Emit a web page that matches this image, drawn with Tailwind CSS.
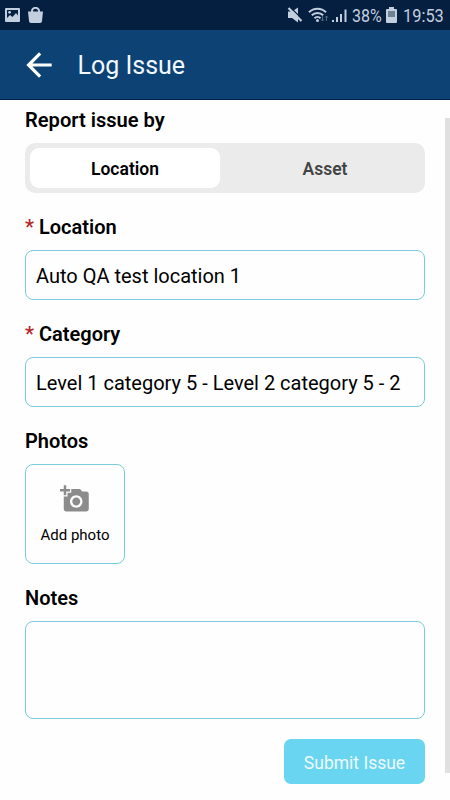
<!DOCTYPE html>
<html lang="en">
<head>
    <meta charset="UTF-8">
    <meta name="viewport" content="width=device-width, initial-scale=1.0">
    <title>Log Issue</title>
    <script src="https://cdn.jsdelivr.net/npm/@tailwindcss/browser@4"></script>
</head>

<body class="bg-[#fefefe] font-[Roboto,sans-serif] text-black h-[800px] overflow-hidden relative">
    <!-- Status bar -->
    <div class="bg-[#041f40] h-[30px] flex items-center justify-between pl-[5px] pr-[6px] text-[#c3cede]">
        <div class="flex items-center gap-2">
            <svg class="w-[15px] h-[14px]" viewBox="0 0 15 14" fill="currentColor">
                <path fill-rule="evenodd" d="M1 0h13a1 1 0 0 1 1 1v12a1 1 0 0 1-1 1H1a1 1 0 0 1-1-1V1a1 1 0 0 1 1-1zm1 2v8l3-3 2.500 2L11 5l2 2.500V2z"/>
                <circle cx="4.600" cy="4.300" r="1.400"/>
            </svg>
            <svg class="w-[15px] h-4" viewBox="0 0 15 16" fill="currentColor">
                <path d="M0 4.500h15l-1 9.500a2 2 0 0 1-2 2H3a2 2 0 0 1-2-2z"/>
                <path d="M4 6V4a3.500 3.200 0 0 1 7 0v2" fill="none" stroke="currentColor" stroke-width="2"/>
            </svg>
        </div>
        <div class="flex items-center">
            <svg class="w-[66px] h-[18px]" viewBox="0 0 66 18" fill="currentColor">
                <path d="M2 5.500h4l6-4v15l-6-4.500H2z"/>
                <path d="M5 2l11 11" stroke="#041f40" stroke-width="1.200"/>
                <path d="M2.500 2l13 13" stroke="currentColor" stroke-width="2.200"/>
                <g fill="none" stroke="currentColor" stroke-width="2">
                    <path d="M23 6.300a12 12 0 0 1 17 0"/>
                    <path d="M25.800 9.300a8 8 0 0 1 11.400 0"/>
                    <path d="M28.500 12.200a4.300 4.300 0 0 1 6 0"/>
                </g>
                <circle cx="31.500" cy="14.500" r="1.500"/>
                <path d="M36.500 10v5m-1.500-1.700l1.500 1.700 1.500-1.700M40.500 15v-5m-1.500 1.700l1.500-1.700 1.500 1.700" fill="none" stroke="#4d6685"/>
                <path d="M46 14h2v2h-2zM50 11h2v5h-2zM54 8h2v8h-2zM58.500 3.500h2v12.500h-2z"/>
            </svg>
            <span class="text-lg leading-none w-[31px] mt-px whitespace-nowrap"><span class="inline-block origin-left scale-x-[0.89]">38%</span></span>
            <svg class="w-[11px] h-4 ml-[3px]" viewBox="0 0 11 16">
                <path d="M3 0h5v2h2a1 1 0 0 1 1 1v12a1 1 0 0 1-1 1H1a1 1 0 0 1-1-1V3a1 1 0 0 1 1-1h2z" fill="#c3cede"/>
                <path d="M2 4h7v6H2z" fill="#6f8294"/>
            </svg>
            <span class="text-lg leading-none w-[41px] ml-1.5 mt-px whitespace-nowrap"><span class="inline-block origin-left scale-x-[0.91]">19:53</span></span>
        </div>
    </div>

    <!-- Header -->
    <header class="bg-[#0d4275] h-[70px] border-b border-[#04204a] flex items-center pl-5 pb-px">
        <svg class="w-[38px] h-[38px] mt-px" viewBox="0 0 24 24" fill="#fff">
            <path d="M20 11H7.830l5.590-5.590L12 4l-8 8 8 8 1.410-1.410L7.830 13H20v-2z"/>
        </svg>
        <h1 class="ml-[19.500px] mt-[4px] text-[25px] leading-8 text-[#f2f8ff]">Log Issue</h1>
    </header>

    <main class="px-[25px] pt-2">
        <h2 class="text-[20.100px] leading-6 font-semibold">Report issue by</h2>
        <div class="mt-[11px] h-[50px] p-[5px] rounded-[10px] bg-[#ebebeb] flex text-[17.500px] font-semibold">
            <button class="w-[190px] pt-0.5 bg-white rounded-[9px]">Location</button>
            <button class="flex-1 pt-0.5 pl-2.5 text-[#444]">Asset</button>
        </div>

        <label class="block mt-[22px] text-xl leading-6 font-semibold"><span class="text-[#b52a2a]">*</span> Location</label>
        <div class="mt-[11px] h-[50px] border border-[#7accdb] rounded-[8px] px-[10px] pt-px flex items-center text-xl">Auto QA test location 1</div>

        <label class="block mt-[22px] text-xl leading-6 font-semibold"><span class="text-[#b52a2a]">*</span> Category</label>
        <div class="mt-[11px] h-[50px] border border-[#7accdb] rounded-[8px] px-[10px] pt-px flex items-center text-xl whitespace-nowrap">Level 1 category 5 - Level 2 category 5 - 2</div>

        <h2 class="mt-[22px] text-xl leading-6 font-semibold">Photos</h2>
        <button class="mt-[11px] w-[100px] h-[100px] border border-[#7accdb] rounded-[8px] flex flex-col items-center pt-[19px]">
            <svg class="w-[30px] h-[30px]" viewBox="0 0 24 24" fill="#8c8c8c">
                <path d="M3 4V1h2v3h3v2H5v3H3V6H0V4h3zm3 6V7h3V4h7l1.830 2H21c1.100 0 2 .9 2 2v12c0 1.100-.9 2-2 2H5c-1.100 0-2-.9-2-2V10h3zm7 9c2.760 0 5-2.240 5-5s-2.240-5-5-5-5 2.240-5 5 2.240 5 5 5zm-3.200-5c0 1.770 1.430 3.200 3.200 3.200s3.200-1.430 3.200-3.200-1.430-3.200-3.200-3.200-3.200 1.430-3.200 3.200z"/>
            </svg>
            <span class="mt-[9px] text-[15px] leading-6">Add photo</span>
        </button>

        <h2 class="mt-[22px] text-xl leading-6 font-semibold">Notes</h2>
        <textarea class="block mt-[11px] w-full h-[98px] border border-[#7accdb] rounded-[8px] resize-none"></textarea>

        <div class="mt-5 flex justify-end">
            <button class="w-[141px] h-[45px] rounded-[7px] bg-[#6ad5f1] text-[#eefbff] text-[17.500px] pt-[3px]">Submit Issue</button>
        </div>
    </main>

    <!-- Scrollbar -->
    <div class="absolute right-0 top-[118px] w-[5px] h-[655px] bg-[#e0e0e0]"></div>
</body>
</html>
